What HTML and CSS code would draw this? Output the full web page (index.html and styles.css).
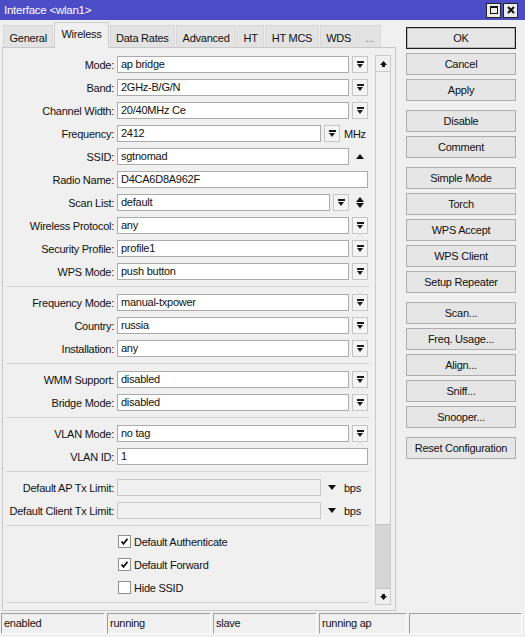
FILE: index.html
```html
<!DOCTYPE html>
<html lang="en">
<head>
    <meta charset="UTF-8">
    <title>Interface &lt;wlan1&gt;</title>
    <link rel="stylesheet" href="styles.css">
</head>
<body>
<div class="window">
    <div class="titlebar">
        <span class="title">Interface &lt;wlan1&gt;</span>
        <div class="title-btns">
            <span class="tbtn">
                <svg width="10" height="10" viewBox="0 0 10 10"><rect x="1.5" y="1.5" width="7" height="7" fill="none" stroke="#111"/><rect x="1" y="1" width="8" height="2" fill="#111"/></svg>
            </span>
            <span class="tbtn">
                <svg width="10" height="10" viewBox="0 0 10 10"><path d="M2 2 L8 8 M8 2 L2 8" stroke="#111" stroke-width="2"/></svg>
            </span>
        </div>
    </div>

    <div class="body">
        <div class="main">
            <div class="tabs">
                <span class="tab">General</span>
                <span class="tab active">Wireless</span>
                <span class="tab">Data Rates</span>
                <span class="tab">Advanced</span>
                <span class="tab">HT</span>
                <span class="tab">HT MCS</span>
                <span class="tab">WDS</span>
                <span class="tab more">...</span>
            </div>

            <div class="panel">
                <div class="form">
                    <div class="row"><span class="lbl">Mode:</span><div class="field"><span class="inp">ap bridge</span><span class="dd"></span></div></div>
                    <div class="row"><span class="lbl">Band:</span><div class="field"><span class="inp">2GHz-B/G/N</span><span class="dd"></span></div></div>
                    <div class="row"><span class="lbl">Channel Width:</span><div class="field"><span class="inp">20/40MHz Ce</span><span class="dd"></span></div></div>
                    <div class="row"><span class="lbl">Frequency:</span><div class="field"><span class="inp">2412</span><span class="dd"></span><span class="unit">MHz</span></div></div>
                    <div class="row"><span class="lbl">SSID:</span><div class="field"><span class="inp">sgtnomad</span><span class="side"><span class="tri-up"></span></span></div></div>
                    <div class="row"><span class="lbl">Radio Name:</span><div class="field"><span class="inp">D4CA6D8A962F</span></div></div>
                    <div class="row"><span class="lbl">Scan List:</span><div class="field"><span class="inp">default</span><span class="dd"></span><span class="side updown"><span class="tri-up"></span><span class="tri-down"></span></span></div></div>
                    <div class="row"><span class="lbl">Wireless Protocol:</span><div class="field"><span class="inp">any</span><span class="dd"></span></div></div>
                    <div class="row"><span class="lbl">Security Profile:</span><div class="field"><span class="inp">profile1</span><span class="dd"></span></div></div>
                    <div class="row"><span class="lbl">WPS Mode:</span><div class="field"><span class="inp">push button</span><span class="dd"></span></div></div>
                    <div class="sep"></div>

                    <div class="row"><span class="lbl">Frequency Mode:</span><div class="field"><span class="inp">manual-txpower</span><span class="dd"></span></div></div>
                    <div class="row"><span class="lbl">Country:</span><div class="field"><span class="inp">russia</span><span class="dd"></span></div></div>
                    <div class="row"><span class="lbl">Installation:</span><div class="field"><span class="inp">any</span><span class="dd"></span></div></div>
                    <div class="sep"></div>

                    <div class="row"><span class="lbl">WMM Support:</span><div class="field"><span class="inp">disabled</span><span class="dd"></span></div></div>
                    <div class="row"><span class="lbl">Bridge Mode:</span><div class="field"><span class="inp">disabled</span><span class="dd"></span></div></div>
                    <div class="sep"></div>

                    <div class="row"><span class="lbl">VLAN Mode:</span><div class="field"><span class="inp">no tag</span><span class="dd"></span></div></div>
                    <div class="row"><span class="lbl">VLAN ID:</span><div class="field"><span class="inp">1</span></div></div>
                    <div class="sep"></div>

                    <div class="row"><span class="lbl">Default AP Tx Limit:</span><div class="field"><span class="inp off"></span><span class="side"><span class="tri-down"></span></span><span class="unit">bps</span></div></div>
                    <div class="row"><span class="lbl">Default Client Tx Limit:</span><div class="field"><span class="inp off"></span><span class="side"><span class="tri-down"></span></span><span class="unit">bps</span></div></div>
                    <div class="sep"></div>

                    <div class="row"><span class="lbl"></span><div class="field"><label class="check"><span class="box on"><svg width="9" height="9" viewBox="0 0 9 9"><path d="M1.5 4.5 L3.5 6.8 L7.5 1.8" fill="none" stroke="#111" stroke-width="1.8"/></svg></span>Default Authenticate</label></div></div>
                    <div class="row"><span class="lbl"></span><div class="field"><label class="check"><span class="box on"><svg width="9" height="9" viewBox="0 0 9 9"><path d="M1.5 4.5 L3.5 6.8 L7.5 1.8" fill="none" stroke="#111" stroke-width="1.8"/></svg></span>Default Forward</label></div></div>
                    <div class="row"><span class="lbl"></span><div class="field"><label class="check"><span class="box"></span>Hide SSID</label></div></div>
                    <div class="sep"></div>
                </div>

                <div class="scroll">
                    <span class="sbtn">
                        <svg width="7" height="6" viewBox="0 0 7 6"><path d="M0 4 L3.5 0 L7 4 H5 V6 H2 V4 Z" fill="#111"/></svg>
                    </span>
                    <div class="track"><div class="thumb"></div></div>
                    <span class="sbtn down">
                        <svg width="7" height="6" viewBox="0 0 7 6"><path d="M0 2 L3.5 6 L7 2 H5 V0 H2 V2 Z" fill="#111"/></svg>
                    </span>
                </div>
            </div>
        </div>

        <div class="actions">
            <button class="btn default">OK</button>
            <button class="btn">Cancel</button>
            <button class="btn">Apply</button>
            <button class="btn group">Disable</button>
            <button class="btn">Comment</button>
            <button class="btn group">Simple Mode</button>
            <button class="btn">Torch</button>
            <button class="btn">WPS Accept</button>
            <button class="btn">WPS Client</button>
            <button class="btn">Setup Repeater</button>
            <button class="btn group">Scan...</button>
            <button class="btn">Freq. Usage...</button>
            <button class="btn">Align...</button>
            <button class="btn">Sniff...</button>
            <button class="btn">Snooper...</button>
            <button class="btn group">Reset Configuration</button>
        </div>
    </div>

    <div class="statusbar">
        <span class="cell">enabled</span>
        <span class="cell">running</span>
        <span class="cell">slave</span>
        <span class="cell narrow">running ap</span>
        <span class="cell wide"></span>
    </div>
</div>
</body>
</html>
```

FILE: styles.css
```css
body {
    margin: 0;
    background: #f0f0f0;
    font-family: "Liberation Sans", Arial, sans-serif;
    font-size: 11px;
    letter-spacing: -0.25px;
    color: #111;
}
.window {
    width: 525px;
    height: 637px;
    display: flex;
    flex-direction: column;
}

/* title bar */
.titlebar {
    height: 20px;
    background: #4c4cc6;
    color: white;
    display: flex;
    align-items: center;
    justify-content: space-between;
    padding: 0 7px 0 4px;
}
.title {
    font-size: 11.5px;
}
.title-btns {
    display: flex;
    gap: 2px;
}
.tbtn {
    width: 15px;
    height: 15px;
    box-sizing: border-box;
    border: 1px solid #222;
    background: #ececec;
    display: flex;
    align-items: center;
    justify-content: center;
}

.body {
    display: flex;
    margin-top: 2px;
}
.main {
    width: 394px;
    margin-left: 2px;
}

/* tabs */
.tabs {
    display: flex;
    align-items: flex-end;
    height: 25px;
    padding-left: 1px;
}
.tab {
    height: 22px;
    box-sizing: border-box;
    padding: 4px 5.5px 0;
    line-height: 16px;
    background: #e3e3e3;
    border: 1px solid #d8d8d8;
    border-bottom: none;
    margin-right: 1px;
    white-space: nowrap;
}
.tab.active {
    height: 26px;
    padding: 3px 6px 0;
    background: #f0f0f0;
    border-color: #cdcdcd;
    margin-bottom: -1px;
    position: relative;
    z-index: 1;
}
.tab.more {
    color: #777;
    padding: 4px 6px 0;
}

/* form panel */
.panel {
    display: flex;
    box-sizing: border-box;
    width: 394px;
    border: 1px solid #c9c9c9;
    background: #f0f0f0;
}
.form {
    padding: 5px 0 3px 1px;
}
.row {
    display: flex;
    align-items: center;
    height: 23px;
}
.lbl {
    width: 113px;
    box-sizing: border-box;
    padding-right: 3px;
    text-align: right;
    white-space: nowrap;
}
.field {
    width: 251px;
    display: flex;
    align-items: center;
    gap: 3px;
}
.inp {
    flex: 1;
    height: 17px;
    box-sizing: border-box;
    border: 1px solid #ababab;
    background: white;
    padding-left: 3px;
    line-height: 15px;
    white-space: nowrap;
}
.inp.off {
    background: #f0f0f0;
    border-color: #c9c9c9;
}
.dd {
    width: 16px;
    height: 17px;
    box-sizing: border-box;
    border: 1px solid #c6c6c6;
    background: #f5f5f5;
    display: flex;
    flex-direction: column;
    align-items: center;
    justify-content: center;
    gap: 1px;
}
.dd::before {
    content: "";
    width: 7px;
    height: 2px;
    background: #1a1a1a;
}
.dd::after {
    content: "";
    border-left: 3.5px solid transparent;
    border-right: 3.5px solid transparent;
    border-top: 4px solid #1a1a1a;
}
.unit {
    width: 24px;
    padding-left: 1px;
}
.side {
    width: 16px;
    display: flex;
    flex-direction: column;
    align-items: center;
    gap: 1px;
}
.tri-up {
    border-left: 4.5px solid transparent;
    border-right: 4.5px solid transparent;
    border-bottom: 5px solid #111;
}
.tri-down {
    border-left: 4px solid transparent;
    border-right: 4px solid transparent;
    border-top: 5px solid #111;
}
.updown .tri-down {
    border-left-width: 4.5px;
    border-right-width: 4.5px;
}
.sep {
    width: 363px;
    height: 1px;
    margin: 3px 0 4px 2px;
    background: #d2d2d2;
}

.check {
    display: flex;
    align-items: center;
    gap: 3px;
    margin-left: 1px;
}
.box {
    width: 13px;
    height: 13px;
    box-sizing: border-box;
    border: 1px solid #8e8e8e;
    background: white;
    display: flex;
    align-items: center;
    justify-content: center;
}

/* scrollbar */
.scroll {
    width: 16px;
    box-sizing: border-box;
    margin: 7px 0 5px 6px;
    border: 1px solid #cbcbcb;
    display: flex;
    flex-direction: column;
}
.sbtn {
    height: 15px;
    display: flex;
    align-items: center;
    justify-content: center;
    border-bottom: 1px solid #cbcbcb;
}
.sbtn.down {
    border-bottom: none;
}
.track {
    flex: 1;
    display: flex;
    flex-direction: column;
    justify-content: flex-end;
}
.thumb {
    height: 63px;
    background: #d6d6d6;
    border-top: 1px solid #c4c4c4;
    border-bottom: 1px solid #c4c4c4;
}

/* right hand buttons */
.actions {
    width: 110px;
    margin-left: 10px;
    padding-top: 5px;
    display: flex;
    flex-direction: column;
    gap: 4px;
}
.btn {
    height: 22px;
    margin: 0;
    padding: 0;
    font: inherit;
    letter-spacing: inherit;
    color: #111;
    background: #e6e6e6;
    border: 1px solid #adadad;
}
.btn.default {
    border-color: #1c1c1c;
    box-shadow: inset 0 0 0 1px rgba(0,0,0,0.2);
}
.btn.group {
    margin-top: 5px;
}

/* status bar */
.statusbar {
    display: flex;
    gap: 2px;
    padding-left: 1px;
    margin-top: 2px;
}
.cell {
    width: 104px;
    height: 21px;
    box-sizing: border-box;
    border: 1px solid;
    border-color: #a0a0a0 #fff #fff #a0a0a0;
    padding-left: 2px;
    line-height: 19px;
    white-space: nowrap;
}
.cell.narrow { width: 88px; }
.cell.wide { width: 113px; }
```
